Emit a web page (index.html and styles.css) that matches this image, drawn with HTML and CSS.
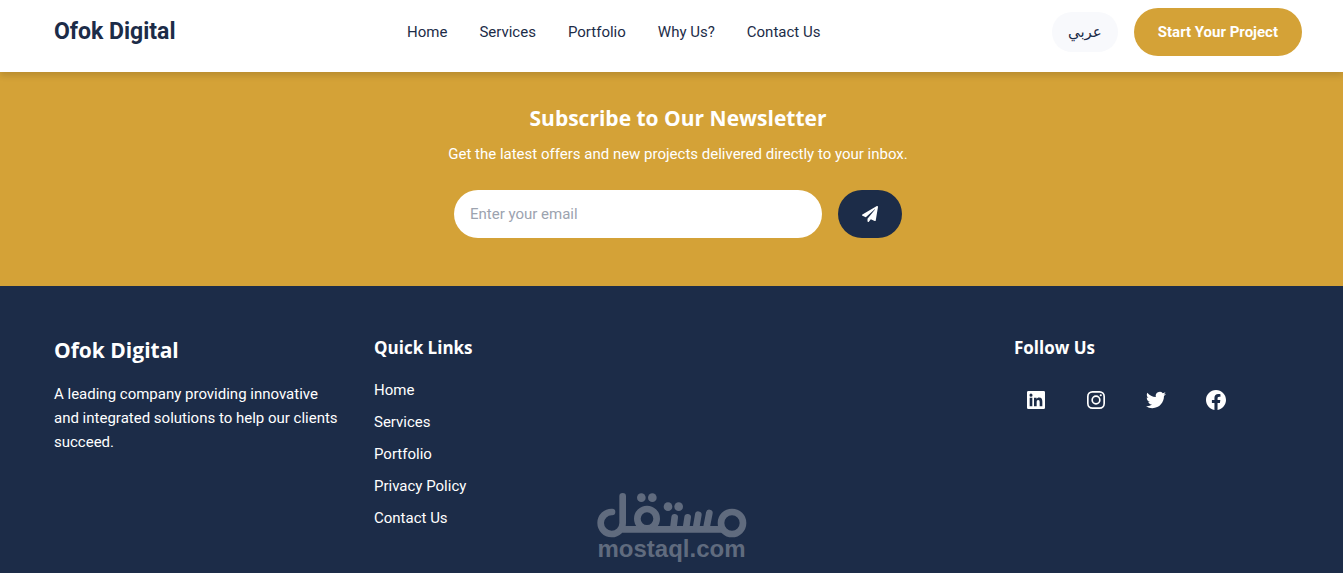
FILE: index.html
```
<!DOCTYPE html>
<html lang="en">
<head>
  <meta charset="utf-8">
  <meta name="viewport" content="width=device-width, initial-scale=1">
  <title>Ofok Digital</title>
  <link rel="stylesheet" href="styles.css">
</head>
<body>
  <header class="site-header gutter">
    <a class="brand" href="#">Ofok Digital</a>
    <nav class="main-nav" aria-label="Main">
      <a href="#">Home</a>
      <a href="#">Services</a>
      <a href="#">Portfolio</a>
      <a href="#">Why Us?</a>
      <a href="#">Contact Us</a>
    </nav>
    <div class="header-actions">
      <button class="lang-button" type="button" lang="ar">عربي</button>
      <button class="cta-button" type="button">Start Your Project</button>
    </div>
  </header>

  <section class="newsletter gutter">
    <h2 class="heading heading-large">Subscribe to Our Newsletter</h2>
    <p class="newsletter-text">Get the latest offers and new projects delivered directly to your inbox.</p>
    <form class="newsletter-form">
      <input class="email-input" type="email" placeholder="Enter your email" aria-label="Enter your email">
      <button class="send-button" type="button" aria-label="Subscribe">
        <svg width="16" height="16" viewBox="0 0 512 512" fill="currentColor" aria-hidden="true"><path d="M476 3.200L12.500 270.600c-18.100 10.400-15.800 35.600 2.200 43.200L121 358.400l287.300-253.200c5.500-4.900 13.300 2.600 8.600 8.300L176 407v80.500c0 23.600 28.500 32.900 42.500 15.800L282 426l124.600 52.200c14.200 6 30.400-2.900 33-18.200l72-432C515 7.800 493.300-6.800 476 3.200z"/></svg>
      </button>
    </form>
  </section>

  <footer class="site-footer gutter">
    <div class="footer-about">
      <h2 class="heading heading-large">Ofok Digital</h2>
      <p class="footer-text">A leading company providing innovative and integrated solutions to help our clients succeed.</p>
    </div>
    <nav class="footer-nav" aria-label="Quick links">
      <h3 class="heading heading-small">Quick Links</h3>
      <ul class="footer-links">
        <li><a href="#">Home</a></li>
        <li><a href="#">Services</a></li>
        <li><a href="#">Portfolio</a></li>
        <li><a href="#">Privacy Policy</a></li>
        <li><a href="#">Contact Us</a></li>
      </ul>
    </nav>
    <div class="footer-social">
      <h3 class="heading heading-small">Follow Us</h3>
      <div class="social-links">
        <a href="#" aria-label="LinkedIn">
          <svg width="20" height="20" viewBox="0 0 24 24" fill="currentColor" aria-hidden="true"><path fill-rule="evenodd" d="M2.800 1.200H21.200A1.600 1.600 0 0 1 22.800 2.800V21.200A1.600 1.600 0 0 1 21.200 22.800H2.800A1.600 1.600 0 0 1 1.200 21.200V2.800A1.600 1.600 0 0 1 2.800 1.200ZM4.400 9.400H7.600V19.600H4.400ZM6 4.300A1.850 1.850 0 1 0 6 8A1.850 1.850 0 1 0 6 4.300ZM9.600 9.400V19.600H12.800V14.600C12.800 12.900 13.300 12 14.600 12C15.900 12 16.400 12.900 16.400 14.600V19.600H19.600V14C19.600 11 18.600 9.100 15.800 9.100C14.200 9.100 13.200 9.900 12.700 10.800V9.400Z"/></svg>
        </a>
        <a href="#" aria-label="Instagram">
          <svg width="20" height="20" viewBox="0 0 24 24" fill="none" stroke="currentColor" stroke-width="2" aria-hidden="true"><rect x="2.200" y="2.200" width="19.600" height="19.600" rx="5.500"/><circle cx="12" cy="12" r="4.600"/><circle cx="17.700" cy="6.300" r="1.300" fill="currentColor" stroke="none"/></svg>
        </a>
        <a href="#" aria-label="Twitter">
          <svg width="20" height="20" viewBox="0 0 24 24" fill="currentColor" aria-hidden="true"><path d="M23.950 4.570a10 10 0 0 1-2.820.77 4.960 4.960 0 0 0 2.160-2.720c-.95.550-2 .950-3.130 1.180a4.920 4.920 0 0 0-8.380 4.480C7.690 8.100 4.070 6.130 1.640 3.160a4.820 4.820 0 0 0-.67 2.480c0 1.710.870 3.210 2.190 4.100a4.900 4.900 0 0 1-2.230-.62v.06a4.920 4.920 0 0 0 3.950 4.830 5 5 0 0 1-2.210.08 4.940 4.940 0 0 0 4.600 3.420A9.870 9.870 0 0 1 0 19.540a13.990 13.990 0 0 0 7.550 2.210c9.050 0 14-7.500 14-13.980 0-.21 0-.42-.02-.63a9.940 9.940 0 0 0 2.460-2.550z"/></svg>
        </a>
        <a href="#" aria-label="Facebook">
          <svg width="20" height="20" viewBox="0 0 24 24" fill="currentColor" aria-hidden="true"><path d="M24 12.070C24 5.450 18.630.070 12 .070S0 5.450 0 12.070c0 5.990 4.390 10.960 10.130 11.860v-8.390H7.080v-3.470h3.050V9.430c0-3.010 1.790-4.670 4.530-4.670 1.310 0 2.680.240 2.680.240v2.950h-1.510c-1.490 0-1.960.930-1.960 1.870v2.250h3.330l-.53 3.470h-2.800v8.390C19.610 23.030 24 18.060 24 12.070z"/></svg>
        </a>
      </div>
    </div>
  </footer>

  <div class="watermark">
    <svg class="watermark-mark" width="150" height="46" viewBox="50 36 450 138" role="img" aria-label="Mostaql logo" fill="none" stroke="currentColor" stroke-width="20" stroke-linecap="round">
      <path d="M95 96A33 33 0 1 0 127 129V49M122 148H424"/>
      <circle cx="200" cy="116" r="29"/>
      <circle cx="455" cy="129" r="33"/>
      <path d="M283 112L279 145M322 112L317 145M354 104L347 145M387 99L378 145"/>
      <g fill="currentColor" stroke="none"><circle cx="183" cy="53" r="13"/><circle cx="216" cy="53" r="13"/><circle cx="263" cy="80" r="13"/><circle cx="295" cy="80" r="13"/></g>
    </svg>
    <span class="watermark-text">mostaql.com</span>
  </div>
</body>
</html>
```

FILE: styles.css
```
:root {
  --navy: #1c2c48;
  --gold: #d4a237;
  --body-font: Roboto, "DejaVu Sans", sans-serif;
  --heading-font: "Open Sans", "DejaVu Sans", sans-serif;
}

* {
  box-sizing: border-box;
}

body {
  display: flex;
  flex-direction: column;
  position: relative;
  min-height: 100vh;
  margin: 0;
  font: 15px/24px var(--body-font);
  color: var(--navy);
}

h2, h3, p, ul {
  margin: 0;
}

a {
  color: inherit;
  text-decoration: none;
}

button, input {
  border: 0;
  font: inherit;
}

button {
  cursor: pointer;
}

.gutter {
  padding-left: 54px;
  padding-right: 41px;
}

.site-header {
  display: flex;
  align-items: center;
  justify-content: space-between;
  position: relative;
  padding-top: 8px;
  padding-bottom: 16px;
  background: #fff;
  box-shadow: 0 4px 6px rgba(0, 0, 0, 0.12);
}

.brand {
  font-size: 23px;
  line-height: 32px;
  font-weight: 700;
}

.main-nav {
  display: flex;
  gap: 32px;
}

.header-actions {
  display: flex;
  align-items: center;
  gap: 16px;
}

.lang-button {
  padding: 8px 16px;
  border-radius: 20px;
  background: #f8f9fc;
  color: var(--navy);
}

.cta-button {
  padding: 12px 24px;
  border-radius: 24px;
  background: var(--gold);
  color: #fff;
  font-weight: 700;
}

.heading {
  font-family: var(--heading-font);
  font-weight: 700;
}

.heading-large {
  font-size: 21px;
  line-height: 32px;
}

.heading-small {
  font-size: 17px;
  line-height: 28px;
}

.newsletter {
  display: flex;
  flex-direction: column;
  align-items: center;
  padding-top: 30px;
  padding-bottom: 48px;
  background: var(--gold);
  color: #fff;
}

.newsletter-text {
  margin-top: 8px;
}

.newsletter-form {
  display: flex;
  gap: 16px;
  width: 100%;
  max-width: 448px;
  margin-top: 24px;
}

.email-input {
  flex: 1;
  min-width: 0;
  padding: 12px 16px;
  border-radius: 24px;
  background: #fff;
  color: var(--navy);
}

.email-input::placeholder {
  color: #9ca3af;
}

.send-button {
  display: flex;
  align-items: center;
  padding: 16px 24px;
  border-radius: 24px;
  background: var(--navy);
  color: #fff;
}

.site-footer {
  display: grid;
  grid-template-columns: repeat(4, 1fr);
  gap: 32px;
  flex: 1;
  padding-top: 48px;
  padding-bottom: 32px;
  background: var(--navy);
  color: #fff;
}

.footer-text,
.footer-links,
.social-links {
  margin-top: 16px;
}

.footer-links {
  display: grid;
  gap: 8px;
  padding: 0;
  list-style: none;
}

.footer-social {
  grid-column: 4;
}

.social-links {
  display: flex;
  gap: 16px;
}

.social-links a {
  display: flex;
  padding: 12px;
}

.watermark {
  position: absolute;
  bottom: 13px;
  left: 50%;
  display: flex;
  flex-direction: column;
  align-items: center;
  transform: translateX(-50%);
  color: #606b7e;
}

.watermark-text {
  font: 700 24px/22px "Liberation Sans", sans-serif;
}
```
